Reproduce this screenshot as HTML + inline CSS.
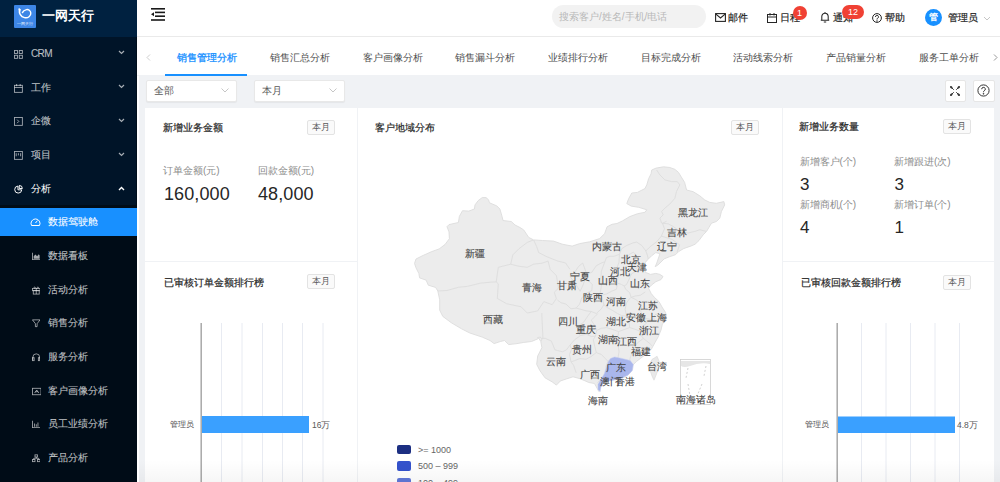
<!DOCTYPE html>
<html><head><meta charset="utf-8">
<style>
*{box-sizing:border-box;margin:0;padding:0}
html,body{width:1000px;height:482px;overflow:hidden;background:#f0f2f5;font-family:"Liberation Sans",sans-serif;font-size:10px;color:#262626}
.a{position:absolute;white-space:nowrap}
#side{position:absolute;left:0;top:0;width:137px;height:482px;background:#001428;box-shadow:inset -1px 0 0 rgba(0,0,0,0.35)}
#logo{position:absolute;left:0;top:0;width:137px;height:37px;background:#002140}
.mi{position:absolute;left:0;width:137px;height:34px;color:rgba(255,255,255,0.7);font-size:10px;-webkit-text-stroke:0.15px rgba(255,255,255,0.5)}
.mi .t{position:absolute;left:31px;top:11px;line-height:12px}
.ic{position:absolute}
#sub{position:absolute;left:0;top:205px;width:137px;height:277px;background:#000c17}
.si{position:absolute;left:0;width:137px;height:28px;color:rgba(255,255,255,0.7);-webkit-text-stroke:0.15px rgba(255,255,255,0.5)}
.si .t{position:absolute;left:48px;top:8px;line-height:12px}
#hdr{position:absolute;left:137px;top:0;width:863px;height:37px;background:#fff;border-bottom:1px solid #eaeaea}
#tabs{position:absolute;left:137px;top:37px;width:863px;height:38px;background:#fff}
.tab{position:absolute;top:51.8px;line-height:12px;color:#4d4d4d;font-size:9.8px}
.card{position:absolute;background:#fff}
.ttl{position:absolute;color:#262626;line-height:12px;font-size:9.8px;-webkit-text-stroke:0.2px #262626}
.tag{position:absolute;height:15px;width:28px;border:1px solid #e3e3e3;border-radius:2px;background:#fafafa;font-size:8.5px;line-height:13px;text-align:center;color:#595959}
.lbl{position:absolute;color:#8c8c8c;line-height:12px}
.val{position:absolute;color:#262626;font-size:18px;line-height:20px}
.ml{position:absolute;text-align:center;color:#444;line-height:12px;font-size:10px;-webkit-text-stroke:0.1px #444}
.sel{position:absolute;top:80px;width:91px;height:21.5px;background:#fff;border:1px solid #e8e8e8;border-radius:2px;box-shadow:0 1px 1px rgba(0,0,0,0.05)}
.sel span{position:absolute;left:7px;top:4px;line-height:12px;color:#595959}
.btn{position:absolute;top:80px;width:22px;height:22px;background:#fff;border:1px solid #e6e6e6;border-radius:2px}
.hi{position:absolute;top:12px;line-height:12px;color:#262626;-webkit-text-stroke:0.2px #262626}
</style></head><body>
<div id="side">
  <div id="logo">
    <div class="a" style="left:14px;top:5px;width:22px;height:23px;background:#3d86e6;border-radius:1px"></div>
    <svg class="ic" style="left:14px;top:5px" width="22" height="23" viewBox="0 0 22 23">
      <path d="M5.3,4.2 C5,8 6.5,11.5 10.5,12.6 C14,13.5 17,11 16.8,8 C16.6,5.5 14.5,4.3 12.5,4.6 C10.5,5 9,6.2 8.4,7.6" fill="none" stroke="#fff" stroke-width="1.4" stroke-linecap="round"/><path d="M4.6,3.8 L6.2,4.6 L5.6,7" fill="none" stroke="#fff" stroke-width="1.2"/>
      <text x="11" y="19.5" font-size="4.2" fill="#e8f0fc" text-anchor="middle">一网天行</text>
    </svg>
    <div class="a" style="left:42px;top:9px;font-size:12.7px;font-weight:bold;color:#fff;line-height:15px">一网天行</div>
  </div>
  <div class="mi" style="top:37px"><span class="t" style="font-size:10px;top:10.5px;letter-spacing:-0.6px">CRM</span>
    <svg class="ic" style="left:14px;top:12.8px" width="8.8" height="8.8" viewBox="0 0 10 10" fill="none" stroke="rgba(255,255,255,0.65)" stroke-width="1"><rect x="0.5" y="0.5" width="3.5" height="3.5"/><rect x="6" y="0.5" width="3.5" height="3.5"/><rect x="0.5" y="6" width="3.5" height="3.5"/><rect x="6" y="6" width="3.5" height="3.5"/></svg>
  </div>
  <div class="mi" style="top:71px"><span class="t">工作</span>
    <svg class="ic" style="left:14px;top:12.8px" width="8.8" height="8.8" viewBox="0 0 10 10" fill="none" stroke="rgba(255,255,255,0.65)" stroke-width="1"><rect x="0.5" y="1.5" width="9" height="8"/><path d="M0.5,4 H9.5 M3,0 V2.5 M7,0 V2.5"/></svg>
  </div>
  <div class="mi" style="top:104px"><span class="t">企微</span>
    <svg class="ic" style="left:14px;top:12.8px" width="8.8" height="8.8" viewBox="0 0 10 10" fill="none" stroke="rgba(255,255,255,0.65)" stroke-width="1"><rect x="0.5" y="0.5" width="9" height="9"/><path d="M3.5,3 L5.5,5 L3.5,7"/></svg>
  </div>
  <div class="mi" style="top:138px"><span class="t">项目</span>
    <svg class="ic" style="left:14px;top:12.8px" width="8.8" height="8.8" viewBox="0 0 10 10" fill="none" stroke="rgba(255,255,255,0.65)" stroke-width="1"><rect x="0.5" y="0.5" width="9" height="9"/><path d="M2.5,2.5 V6 M5,2.5 V5 M7.5,2.5 V6"/></svg>
  </div>
  <div class="mi" style="top:172px;color:#fff"><span class="t">分析</span>
    <svg class="ic" style="left:14px;top:12.8px" width="8.8" height="8.8" viewBox="0 0 10 10" fill="none" stroke="#fff" stroke-width="1.1"><path d="M4.5,1.2 A4,4 0 1 0 8.8,5.5 H4.5Z"/><path d="M6,0.5 A3.5,3.5 0 0 1 9.5,4 H6Z"/></svg>
  </div>
  <svg class="ic" style="left:118px;top:50px" width="7" height="5" viewBox="0 0 7 5" fill="none" stroke="rgba(255,255,255,0.65)" stroke-width="1.2"><path d="M1,1 L3.5,3.5 L6,1"/></svg>
  <svg class="ic" style="left:118px;top:84px" width="7" height="5" viewBox="0 0 7 5" fill="none" stroke="rgba(255,255,255,0.65)" stroke-width="1.2"><path d="M1,1 L3.5,3.5 L6,1"/></svg>
  <svg class="ic" style="left:118px;top:118px" width="7" height="5" viewBox="0 0 7 5" fill="none" stroke="rgba(255,255,255,0.65)" stroke-width="1.2"><path d="M1,1 L3.5,3.5 L6,1"/></svg>
  <svg class="ic" style="left:118px;top:152px" width="7" height="5" viewBox="0 0 7 5" fill="none" stroke="rgba(255,255,255,0.65)" stroke-width="1.2"><path d="M1,1 L3.5,3.5 L6,1"/></svg>
  <svg class="ic" style="left:118px;top:186px" width="7" height="5" viewBox="0 0 7 5" fill="none" stroke="#fff" stroke-width="1.4"><path d="M1,4 L3.5,1.5 L6,4"/></svg>
  <div id="sub">
    <div class="si" style="top:3px;background:#1890ff;color:#fff"><span class="t">数据驾驶舱</span>
      <svg class="ic" style="left:30px;top:9px" width="11" height="10" viewBox="0 0 11 10" fill="none" stroke="#fff" stroke-width="1"><path d="M1.5,8.5 A4.5,4.5 0 1 1 9.5,8.5 Z"/><path d="M5.5,6 L7.5,3.5"/></svg>
    </div>
    <div class="si" style="top:37px"><span class="t">数据看板</span>
      <svg class="ic" style="left:31.5px;top:10px" width="8.5" height="8.5" viewBox="0 0 10 10" fill="rgba(255,255,255,0.65)"><path d="M0,1 H1 V8.5 H10 V9.5 H0Z M2,8 V5 L4,3 L6,5 L8,2.5 L9,4 V8Z"/></svg>
    </div>
    <div class="si" style="top:71px"><span class="t">活动分析</span>
      <svg class="ic" style="left:31.5px;top:10px" width="8.5" height="8.5" viewBox="0 0 10 10" fill="none" stroke="rgba(255,255,255,0.65)" stroke-width="1"><rect x="0.5" y="3" width="9" height="2.5"/><rect x="1.5" y="5.5" width="7" height="4"/><path d="M5,3 V9.5 M5,3 C3,0 1.5,1.5 3,3 M5,3 C7,0 8.5,1.5 7,3"/></svg>
    </div>
    <div class="si" style="top:104px"><span class="t">销售分析</span>
      <svg class="ic" style="left:31.5px;top:10px" width="8.5" height="8.5" viewBox="0 0 10 10" fill="none" stroke="rgba(255,255,255,0.65)" stroke-width="1"><path d="M0.5,1 H9.5 L6,5.5 V9 H4 V5.5Z"/></svg>
    </div>
    <div class="si" style="top:138px"><span class="t">服务分析</span>
      <svg class="ic" style="left:31.5px;top:10px" width="8.5" height="8.5" viewBox="0 0 10 10" fill="none" stroke="rgba(255,255,255,0.65)" stroke-width="1"><path d="M1,8 V5 A4,4 0 0 1 9,5 V8"/><rect x="0.5" y="5.5" width="2" height="3.5"/><rect x="7.5" y="5.5" width="2" height="3.5"/></svg>
    </div>
    <div class="si" style="top:172px"><span class="t">客户画像分析</span>
      <svg class="ic" style="left:31.5px;top:10px" width="9.5" height="8.6" viewBox="0 0 11 10" fill="none" stroke="rgba(255,255,255,0.65)" stroke-width="1"><rect x="0.5" y="1.5" width="10" height="7.5"/><path d="M3,7 L5.5,3.5 L8,7 M4,5.5 H7"/></svg>
    </div>
    <div class="si" style="top:205px"><span class="t">员工业绩分析</span>
      <svg class="ic" style="left:31.5px;top:10px" width="8.5" height="8.5" viewBox="0 0 10 10" fill="rgba(255,255,255,0.65)"><path d="M0,1 H1 V8.5 H10 V9.5 H0Z M2.5,4 H3.5 V8 H2.5Z M4.5,5 H5.5 V8 H4.5Z M6.5,3 H7.5 V8 H6.5Z"/></svg>
    </div>
    <div class="si" style="top:239px"><span class="t">产品分析</span>
      <svg class="ic" style="left:31.5px;top:10px" width="8.5" height="8.5" viewBox="0 0 10 10" fill="none" stroke="rgba(255,255,255,0.65)" stroke-width="1"><rect x="3.5" y="1" width="3" height="2.5"/><rect x="0.5" y="6.5" width="3" height="2.5"/><rect x="6.5" y="6.5" width="3" height="2.5"/><path d="M5,3.5 V5 M2,6.5 V5 H8 V6.5"/></svg>
    </div>
  </div>
</div>
<div id="hdr"></div>
<!-- header -->
<svg class="ic" style="left:150px;top:7px" width="16" height="15" viewBox="0 0 16 15" fill="#1a1a1a"><rect x="1" y="1" width="14" height="1.6"/><rect x="5" y="4.6" width="10" height="1.6"/><rect x="5" y="8.4" width="10" height="1.6"/><rect x="1" y="12.2" width="14" height="1.6"/><path d="M1,7.3 L4,5.3 V9.3Z"/></svg>
<div class="a" style="left:552px;top:5px;width:154px;height:23px;background:#f2f2f2;border-radius:12px"></div>
<div class="a" style="left:559px;top:10.5px;line-height:12px;color:#b8b8b8">搜索客户/姓名/手机/电话</div>
<svg class="ic" style="left:715px;top:13px" width="11" height="9" viewBox="0 0 11 9" fill="none" stroke="#262626" stroke-width="1.1"><rect x="0.6" y="0.6" width="9.8" height="7.8"/><path d="M0.6,0.8 L5.5,5 L10.4,0.8"/></svg>
<div class="hi" style="left:728px">邮件</div>
<svg class="ic" style="left:767px;top:12.5px" width="10" height="10" viewBox="0 0 10 10" fill="none" stroke="#262626" stroke-width="1"><rect x="0.5" y="1.5" width="9" height="8"/><path d="M0.5,4 H9.5 M3,0 V2.5 M7,0 V2.5"/></svg>
<div class="hi" style="left:780px">日程</div>
<div class="a" style="left:792.5px;top:6px;width:14px;height:14px;border-radius:7px;background:#f04134;color:#fff;font-size:9px;line-height:14px;text-align:center">1</div>
<svg class="ic" style="left:819.5px;top:11px" width="10" height="12" viewBox="0 0 10 12" fill="none" stroke="#262626" stroke-width="1.05"><path d="M0.8,9.3 H9.2 M1.8,9.3 V5.5 A3.2,3.3 0 0 1 8.2,5.5 V9.3 M3.8,11 H6.2 M5,1 V2.2"/></svg>
<div class="hi" style="left:833px">通知</div>
<div class="a" style="left:842px;top:5px;width:22px;height:14px;border-radius:7px;background:#f04134;color:#fff;font-size:9px;line-height:14px;text-align:center">12</div>
<svg class="ic" style="left:872px;top:13px" width="10" height="10" viewBox="0 0 10 10" fill="none" stroke="#262626" stroke-width="1"><circle cx="5" cy="5" r="4.4"/><path d="M3.5,4 A1.5,1.5 0 1 1 5.5,5.3 C5,5.5 5,6 5,6.5"/><circle cx="5" cy="8" r="0.3"/></svg>
<div class="hi" style="left:885px">帮助</div>
<div class="a" style="left:924.5px;top:9px;width:17px;height:17px;border-radius:9px;background:#1890ff;color:#fff;font-size:8.5px;line-height:17px;text-align:center;font-weight:bold">管</div>
<div class="hi" style="left:948px">管理员</div>
<svg class="ic" style="left:983px;top:16px" width="8" height="5" viewBox="0 0 8 5" fill="none" stroke="#bfbfbf" stroke-width="0.9"><path d="M1,1 L4,4 L7,1"/></svg>

<div id="tabs"></div>
<svg class="ic" style="left:146px;top:54px" width="5" height="7" viewBox="0 0 5 7" fill="none" stroke="#c8c8c8" stroke-width="0.9"><path d="M4,0.5 L1,3.5 L4,6.5"/></svg>
<svg class="ic" style="left:993px;top:54px" width="5" height="7" viewBox="0 0 5 7" fill="none" stroke="#8c8c8c" stroke-width="0.9"><path d="M1,0.5 L4,3.5 L1,6.5"/></svg>
<div class="tab" style="left:177px;color:#1890ff;-webkit-text-stroke:0.3px #1890ff">销售管理分析</div>
<div class="tab" style="left:270px">销售汇总分析</div>
<div class="tab" style="left:362.5px">客户画像分析</div>
<div class="tab" style="left:455px">销售漏斗分析</div>
<div class="tab" style="left:547.5px">业绩排行分析</div>
<div class="tab" style="left:640.5px">目标完成分析</div>
<div class="tab" style="left:733px">活动线索分析</div>
<div class="tab" style="left:825.5px">产品销量分析</div>
<div class="tab" style="left:918.5px">服务工单分析</div>
<div class="a" style="left:165px;top:74px;width:82px;height:2px;background:#1890ff"></div>
<div class="a" style="left:137px;top:76px;width:2px;height:406px;background:#fff"></div>

<!-- filters -->
<div class="sel" style="left:145.8px"><span>全部</span></div>
<div class="sel" style="left:253.8px"><span>本月</span></div>
<svg class="ic" style="left:221px;top:88px" width="8" height="5" viewBox="0 0 8 5" fill="none" stroke="#c0c0c0" stroke-width="0.9"><path d="M0.5,0.5 L4,4 L7.5,0.5"/></svg>
<svg class="ic" style="left:329px;top:88px" width="8" height="5" viewBox="0 0 8 5" fill="none" stroke="#c0c0c0" stroke-width="0.9"><path d="M0.5,0.5 L4,4 L7.5,0.5"/></svg>
<div class="btn" style="left:944.5px;width:21.5px;height:21.5px"></div>
<div class="btn" style="left:972.5px"></div>
<svg class="ic" style="left:949px;top:85px" width="12" height="12" viewBox="0 0 12 12" fill="none" stroke="#333" stroke-width="1" stroke-linecap="round"><path d="M2,2 L4.5,4.5 M10,2 L7.5,4.5 M2,10 L4.5,7.5 M10,10 L7.5,7.5"/><g stroke-width="2"><path d="M2,2 L2.6,2.6 M10,2 L9.4,2.6 M2,10 L2.6,9.4 M10,10 L9.4,9.4"/></g></svg>
<svg class="ic" style="left:977.2px;top:84px" width="13" height="13" viewBox="0 0 13 13" fill="none" stroke="#333" stroke-width="1"><circle cx="6.5" cy="6.5" r="5.6"/><path d="M4.7,5.2 A1.8,1.8 0 1 1 7.2,6.8 C6.6,7.1 6.5,7.5 6.5,8.2"/><circle cx="6.5" cy="9.8" r="0.4" fill="#333"/></svg>

<!-- cards -->
<div class="card" style="left:145px;top:108px;width:212px;height:153px"></div>
<div class="card" style="left:145px;top:262px;width:212px;height:220px"></div>
<div class="card" style="left:358px;top:108px;width:424px;height:374px"></div>
<div class="card" style="left:783px;top:108px;width:211px;height:153px"></div>
<div class="card" style="left:783px;top:262px;width:211px;height:220px"></div>

<div class="ttl" style="left:163px;top:122px">新增业务金额</div>
<div class="tag" style="left:307px;top:120px">本月</div>
<div class="lbl" style="left:163px;top:165px">订单金额(元)</div>
<div class="lbl" style="left:257.5px;top:165px">回款金额(元)</div>
<div class="val" style="left:164px;top:183.5px;letter-spacing:0.1px">160,000</div>
<div class="val" style="left:258px;top:183.5px;letter-spacing:0.1px">48,000</div>

<div class="ttl" style="left:163.5px;top:276.5px">已审核订单金额排行榜</div>
<div class="tag" style="left:307px;top:274px">本月</div>
<svg class="ic" style="left:145px;top:262px" width="212" height="220">
  <g stroke="#e8ebf2" stroke-width="1"><path d="M76.5,61 V220 M97,61 V220 M117.5,61 V220 M137.5,61 V220 M157.5,61 V220 M178,61 V220"/></g>
  <path d="M56.2,61 V220" stroke="#a8a8a8" stroke-width="1.5"/>
  <rect x="57" y="154" width="107" height="17" fill="#3aa0ff"/>
</svg>
<div class="a" style="left:170px;top:418.5px;line-height:12px;font-size:8px;color:#4a4a4a">管理员</div>
<div class="a" style="left:312px;top:418.5px;line-height:12px;font-size:8.5px;color:#595959">16万</div>

<div class="ttl" style="left:375px;top:122px">客户地域分布</div>
<div class="tag" style="left:731px;top:120px">本月</div>
<svg class="a" style="left:0;top:0" width="1000" height="482" viewBox="0 0 1000 482">
<defs><clipPath id="cl"><path d="M414.5,263.4 L416.0,259.0 L423.2,255.4 L431.2,251.8 L439.2,248.9 L445.0,244.5 L449.4,238.7 L449.0,231.9 L447.0,226.7 L449.0,224.6 L458.4,222.5 L459.4,216.3 L462.5,210.7 L468.8,211.1 L474.4,209.0 L475.0,204.9 L478.1,200.7 L482.2,197.6 L486.0,197.6 L488.5,199.7 L489.5,202.8 L496.8,205.9 L499.9,209.0 L502.0,216.3 L503.0,220.5 L511.3,221.5 L515.0,225.0 L520.0,227.5 L523.7,229.9 L528.7,237.4 L533.6,239.9 L542.4,240.5 L553.6,241.1 L562.3,244.2 L572.2,246.1 L579.7,243.6 L589.6,241.8 L599.6,238.6 L604.6,233.7 L607.1,226.8 L612.0,224.3 L617.0,223.5 L622.3,221.0 L629.8,216.6 L637.3,213.8 L644.9,212.3 L646.8,209.8 L638.7,207.3 L631.2,206.1 L626.8,203.6 L628.7,198.6 L631.8,193.0 L637.4,192.4 L644.9,188.6 L646.8,184.9 L648.6,178.7 L651.1,173.7 L651.7,170.0 L656.1,168.1 L663.6,166.8 L669.8,167.5 L674.8,169.3 L678.5,172.4 L684.6,182.4 L686.6,190.0 L693.2,191.7 L699.8,195.8 L704.8,200.0 L709.8,202.4 L716.4,203.3 L723.9,201.6 L724.7,204.9 L721.4,211.6 L719.8,218.2 L716.4,221.5 L711.5,223.2 L709.0,227.3 L706.5,231.5 L703.2,234.8 L699.0,240.5 L695.0,244.3 L690.0,246.4 L683.8,248.5 L678.6,251.6 L675.5,254.7 L669.3,256.8 L664.1,258.9 L661.0,262.0 L657.8,265.1 L655.2,266.7 L656.8,263.0 L658.9,256.8 L659.9,253.7 L655.8,252.6 L651.6,255.8 L647.5,259.9 L644.8,263.0 L644.3,268.2 L645.5,272.4 L650.6,274.4 L655.8,273.4 L659.9,274.4 L663.0,276.5 L661.0,279.6 L655.8,281.7 L651.6,285.0 L648.5,288.1 L651.2,293.5 L654.5,297.5 L659.0,301.6 L662.0,307.0 L665.5,312.4 L666.5,316.4 L665.8,320.5 L662.4,324.0 L661.0,329.9 L658.5,336.3 L655.0,342.5 L651.2,349.5 L647.3,353.2 L640.5,358.4 L636.4,361.5 L632.9,365.0 L632.6,369.5 L628.1,375.0 L621.9,378.5 L615.6,379.5 L608.4,379.5 L604.2,381.2 L600.1,385.4 L598.0,390.5 L599.3,391.6 L597.5,389.0 L594.5,383.5 L588.9,382.5 L580.0,378.7 L573.0,376.8 L566.8,378.8 L560.5,380.9 L556.4,385.1 L552.2,381.9 L545.0,377.8 L539.8,370.5 L536.7,364.3 L537.7,356.0 L541.9,347.7 L540.8,341.5 L538.8,338.4 L531.5,341.5 L523.2,342.5 L517.0,343.6 L508.7,344.6 L504.5,340.5 L500.4,341.5 L494.1,343.6 L490.0,340.5 L482.2,337.1 L469.8,333.0 L461.5,328.8 L451.1,322.6 L442.8,316.4 L439.7,310.2 L439.7,299.8 L437.8,291.0 L435.6,287.4 L428.3,285.2 L426.1,280.1 L419.6,277.9 L418.9,273.6 L416.0,267.8Z"/></clipPath></defs>
<path d="M414.5,263.4 L416.0,259.0 L423.2,255.4 L431.2,251.8 L439.2,248.9 L445.0,244.5 L449.4,238.7 L449.0,231.9 L447.0,226.7 L449.0,224.6 L458.4,222.5 L459.4,216.3 L462.5,210.7 L468.8,211.1 L474.4,209.0 L475.0,204.9 L478.1,200.7 L482.2,197.6 L486.0,197.6 L488.5,199.7 L489.5,202.8 L496.8,205.9 L499.9,209.0 L502.0,216.3 L503.0,220.5 L511.3,221.5 L515.0,225.0 L520.0,227.5 L523.7,229.9 L528.7,237.4 L533.6,239.9 L542.4,240.5 L553.6,241.1 L562.3,244.2 L572.2,246.1 L579.7,243.6 L589.6,241.8 L599.6,238.6 L604.6,233.7 L607.1,226.8 L612.0,224.3 L617.0,223.5 L622.3,221.0 L629.8,216.6 L637.3,213.8 L644.9,212.3 L646.8,209.8 L638.7,207.3 L631.2,206.1 L626.8,203.6 L628.7,198.6 L631.8,193.0 L637.4,192.4 L644.9,188.6 L646.8,184.9 L648.6,178.7 L651.1,173.7 L651.7,170.0 L656.1,168.1 L663.6,166.8 L669.8,167.5 L674.8,169.3 L678.5,172.4 L684.6,182.4 L686.6,190.0 L693.2,191.7 L699.8,195.8 L704.8,200.0 L709.8,202.4 L716.4,203.3 L723.9,201.6 L724.7,204.9 L721.4,211.6 L719.8,218.2 L716.4,221.5 L711.5,223.2 L709.0,227.3 L706.5,231.5 L703.2,234.8 L699.0,240.5 L695.0,244.3 L690.0,246.4 L683.8,248.5 L678.6,251.6 L675.5,254.7 L669.3,256.8 L664.1,258.9 L661.0,262.0 L657.8,265.1 L655.2,266.7 L656.8,263.0 L658.9,256.8 L659.9,253.7 L655.8,252.6 L651.6,255.8 L647.5,259.9 L644.8,263.0 L644.3,268.2 L645.5,272.4 L650.6,274.4 L655.8,273.4 L659.9,274.4 L663.0,276.5 L661.0,279.6 L655.8,281.7 L651.6,285.0 L648.5,288.1 L651.2,293.5 L654.5,297.5 L659.0,301.6 L662.0,307.0 L665.5,312.4 L666.5,316.4 L665.8,320.5 L662.4,324.0 L661.0,329.9 L658.5,336.3 L655.0,342.5 L651.2,349.5 L647.3,353.2 L640.5,358.4 L636.4,361.5 L632.9,365.0 L632.6,369.5 L628.1,375.0 L621.9,378.5 L615.6,379.5 L608.4,379.5 L604.2,381.2 L600.1,385.4 L598.0,390.5 L599.3,391.6 L597.5,389.0 L594.5,383.5 L588.9,382.5 L580.0,378.7 L573.0,376.8 L566.8,378.8 L560.5,380.9 L556.4,385.1 L552.2,381.9 L545.0,377.8 L539.8,370.5 L536.7,364.3 L537.7,356.0 L541.9,347.7 L540.8,341.5 L538.8,338.4 L531.5,341.5 L523.2,342.5 L517.0,343.6 L508.7,344.6 L504.5,340.5 L500.4,341.5 L494.1,343.6 L490.0,340.5 L482.2,337.1 L469.8,333.0 L461.5,328.8 L451.1,322.6 L442.8,316.4 L439.7,310.2 L439.7,299.8 L437.8,291.0 L435.6,287.4 L428.3,285.2 L426.1,280.1 L419.6,277.9 L418.9,273.6 L416.0,267.8Z" fill="#ececec" stroke="#dcdcdc" stroke-width="0.9"/>
<path d="M437.8,291.0 L447.0,290.5 L458.4,287.3 L467.7,286.3 L480.2,283.2 L490.5,282.2 L496.2,281.9 M498.3,267.3 L496.2,281.9 L498.3,283.9 L497.3,298.5 L506.6,303.7 L521.1,306.8 L527.3,313.0 L537.7,310.9 L543.9,301.6 L552.2,304.7 L556.4,298.5 L554.3,292.2 L558.5,288.1 L556.4,275.6 L550.2,269.4 L548.1,261.1 M498.3,267.3 L502.4,266.3 L510.7,264.2 L519.0,266.3 L527.3,267.3 L533.6,264.2 L541.9,263.2 L548.1,261.1 M510.7,264.2 L512.8,254.9 L519.0,248.7 L527.3,242.4 L533.6,239.9 M533.6,239.9 L536.6,246.4 L538.7,252.6 L547.0,256.8 L557.3,260.9 L565.6,263.0 L569.8,269.2 M541.9,313.0 L541.9,316.6 L542.9,337.3 L540.8,341.5 M656.6,170.0 L659.9,174.9 L664.9,179.9 L671.5,181.6 L677.3,181.6 L679.8,184.9 L676.5,191.5 L674.9,198.2 L669.9,204.0 L664.9,208.1 L661.6,211.5 L663.2,214.8 L659.9,218.1 L661.6,223.1 M661.6,223.1 L668.2,223.9 L673.2,226.4 L679.8,231.4 L688.1,233.0 L694.8,231.4 L700.0,229.7 L706.5,231.5 M570.0,276.5 L574.6,272.4 L578.6,266.4 L582.7,263.0 L586.7,273.8 L585.2,279.2 L582.7,285.9 L580.1,291.3 L577.6,287.2 L575.6,283.9 L570.0,276.5 M586.7,273.8 L591.8,272.4 L596.3,265.7 L601.4,263.0 L604.9,261.7 L606.4,257.6 L609.9,256.3 L614.0,256.3 L619.5,254.3 L621.5,248.9 L626.6,245.5 L633.2,242.8 L636.7,242.1 L641.8,245.5 L645.8,250.9 L650.8,246.2 L656.9,241.5 L661.4,236.1 L664.5,228.7 L662.5,223.3 L666.5,221.3 M661.4,236.1 L672.0,239.4 L679.6,244.8 L677.1,252.2 M645.8,250.9 L647.3,254.9 L648.3,259.0 M626.6,258.3 L628.6,254.9 L633.2,252.2 L636.2,254.9 L635.2,259.0 L632.7,261.7 L629.1,261.7 L626.6,258.3 M635.2,257.6 L637.2,257.6 L639.2,264.3 L636.7,268.4 L634.2,267.7 L634.2,262.3 L635.2,257.6 M619.5,254.3 L619.0,262.3 L617.0,267.7 L619.0,275.1 L617.0,281.2 L617.5,283.2 L621.5,284.5 L624.1,285.9 L626.6,284.5 L629.1,279.2 L631.6,273.8 L638.2,269.7 M604.9,261.7 L601.4,271.1 L600.8,279.2 L601.4,285.9 L600.3,292.6 L601.4,295.3 L606.4,294.0 L611.5,291.3 L616.5,289.2 L617.5,283.2 M601.4,295.3 L602.9,300.7 L603.9,304.7 L601.4,308.8 L596.3,313.5 L591.2,311.5 L586.2,310.8 L581.1,309.4 L576.1,308.1 M576.1,308.1 L579.6,304.1 L581.7,298.0 L586.2,293.3 L591.8,290.6 L592.3,284.5 L587.7,279.8 L585.2,279.2 M576.1,308.1 L571.0,308.8 L566.0,304.1 L561.0,302.7 L557.4,300.0 M624.1,285.9 L625.6,289.2 L629.6,292.6 L631.1,297.3 L635.2,296.0 L640.2,295.3 L645.3,291.9 M631.1,297.3 L629.1,299.3 L626.6,302.7 L625.1,309.4 L626.1,314.1 L627.1,316.2 L621.5,315.5 L617.5,313.5 L612.0,310.1 L606.9,307.4 L603.9,304.7 M631.1,297.3 L636.7,300.0 L641.8,306.1 L640.7,311.5 L644.3,317.5 L645.3,318.2 L650.8,319.5 L653.9,320.2 M653.9,316.2 L655.9,314.1 L658.9,314.8 L659.4,320.2 L654.4,320.9 L653.9,316.2 M645.3,318.2 L646.8,322.9 L641.2,327.6 L639.7,331.0 L634.2,329.0 L629.6,327.6 L629.1,320.9 L627.1,316.2 M639.7,331.0 L641.2,335.7 L643.3,338.4 L646.8,341.1 L650.8,344.4 L651.9,345.8 M643.3,338.4 L637.2,343.1 L633.2,349.8 L630.6,356.5 L629.1,362.6 L632.2,364.6 L635.2,370.0 M629.1,362.6 L626.6,362.6 L622.6,362.6 L619.0,361.3 L618.0,357.9 L619.0,351.8 L618.0,344.4 L618.0,337.0 L618.5,331.6 L624.1,329.6 L629.6,327.6 M618.5,331.6 L613.0,329.6 L606.4,327.6 L601.4,328.3 L596.8,330.3 L593.8,324.2 L591.2,320.2 L595.3,316.2 L597.8,313.5 M618.0,357.9 L614.0,359.9 L610.4,359.9 L607.9,361.3 L605.4,358.6 L601.4,354.5 L597.8,353.2 L596.3,352.5 L594.8,346.5 L593.3,339.7 L595.3,336.4 L596.8,330.3 M607.9,361.3 L605.9,366.6 L607.4,373.4 L601.4,378.8 L597.3,382.8 M596.3,352.5 L591.2,356.5 L586.2,359.2 L579.6,358.6 L574.6,360.6 L571.0,361.9 L573.6,365.3 L576.1,372.7 M571.0,361.9 L569.5,354.5 L571.6,349.1 L570.0,345.1 L574.6,339.7 L578.6,337.0 L580.1,335.7 L586.2,334.3 L591.2,336.4 L595.3,336.4 M580.1,335.7 L577.6,331.0 L579.6,324.9 L583.7,322.2 L587.7,316.2 L591.2,311.5 M570.0,345.1 L566.5,349.8 L562.5,351.8 L557.4,350.5 L554.9,349.8 L551.4,341.1 L545.3,338.4 L541.3,338.4 L540.2,337.0 L537.2,337.7" fill="none" stroke="#dcdcdc" stroke-width="0.9" clip-path="url(#cl)"/>
<path d="M610.5,358.4 L614.6,356.9 L621.9,358.4 L630.2,360.5 L633.3,364.6 L632.2,370.8 L628.1,375.0 L621.9,378.1 L613.6,380.2 L607.3,381.2 L603.2,383.3 L601.1,386.4 L600.1,391.6 L598.0,389.5 L598.0,384.3 L601.1,379.1 L604.2,373.9 L606.3,367.7 L608.4,361.5Z" fill="#a9b6ec" stroke="#c4cdf0" stroke-width="0.5"/>
<path d="M652.0,359.4 L657.1,356.3 L659.2,361.5 L658.2,369.8 L654.0,380.2 L652.0,376.0 L649.9,369.8 L649.9,363.6Z" fill="#e9e9e9" stroke="#d6d6d6" stroke-width="0.6"/>
<rect x="680.5" y="359.5" width="30" height="45" fill="none" stroke="#cfcfcf" stroke-width="0.8"/>
<path d="M681,361 L710,361 L710,364 Q700,362 690,366 Q684,368 681,366Z" fill="#e6e6e6"/>
<path d="M688,368 L686,378 M688,384 L690,396 M706,366 L704,376 M702,384 L697,396" stroke="#bdbdbd" stroke-width="0.7" stroke-dasharray="2,2" fill="none"/>
</svg>
<div class="ml" style="left:678.2px;top:207.3px;width:30px">黑龙江</div>
<div class="ml" style="left:666.6px;top:227.1px;width:20px">吉林</div>
<div class="ml" style="left:657.3px;top:241.2px;width:20px">辽宁</div>
<div class="ml" style="left:592.4px;top:241.0px;width:30px">内蒙古</div>
<div class="ml" style="left:621.2px;top:253.6px;width:20px">北京</div>
<div class="ml" style="left:627.3px;top:261.6px;width:20px">天津</div>
<div class="ml" style="left:609.5px;top:266.1px;width:20px">河北</div>
<div class="ml" style="left:598.2px;top:274.8px;width:20px">山西</div>
<div class="ml" style="left:629.5px;top:278.3px;width:20px">山东</div>
<div class="ml" style="left:569.8px;top:271.3px;width:20px">宁夏</div>
<div class="ml" style="left:556.7px;top:279.6px;width:20px">甘肃</div>
<div class="ml" style="left:521.6px;top:281.8px;width:20px">青海</div>
<div class="ml" style="left:465.0px;top:247.6px;width:20px">新疆</div>
<div class="ml" style="left:482.6px;top:314.1px;width:20px">西藏</div>
<div class="ml" style="left:583.0px;top:292.1px;width:20px">陕西</div>
<div class="ml" style="left:606.4px;top:295.6px;width:20px">河南</div>
<div class="ml" style="left:637.8px;top:300.0px;width:20px">江苏</div>
<div class="ml" style="left:626.0px;top:312.1px;width:20px">安徽</div>
<div class="ml" style="left:647.0px;top:312.1px;width:20px">上海</div>
<div class="ml" style="left:605.6px;top:315.7px;width:20px">湖北</div>
<div class="ml" style="left:557.9px;top:315.6px;width:20px">四川</div>
<div class="ml" style="left:575.8px;top:324.0px;width:20px">重庆</div>
<div class="ml" style="left:638.5px;top:325.1px;width:20px">浙江</div>
<div class="ml" style="left:598.2px;top:334.0px;width:20px">湖南</div>
<div class="ml" style="left:617.0px;top:335.5px;width:20px">江西</div>
<div class="ml" style="left:572.4px;top:343.7px;width:20px">贵州</div>
<div class="ml" style="left:630.7px;top:346.3px;width:20px">福建</div>
<div class="ml" style="left:546.0px;top:355.9px;width:20px">云南</div>
<div class="ml" style="left:647.0px;top:361.1px;width:20px">台湾</div>
<div class="ml" style="left:605.7px;top:361.6px;width:20px">广东</div>
<div class="ml" style="left:579.7px;top:369.4px;width:20px">广西</div>
<div class="ml" style="left:599.8px;top:376.0px;width:20px">澳门</div>
<div class="ml" style="left:614.5px;top:376.0px;width:20px">香港</div>
<div class="ml" style="left:588.0px;top:394.5px;width:20px">海南</div>
<div class="ml" style="left:675.5px;top:393.7px;width:40px">南海诸岛</div>

<div class="a" style="left:397px;top:444.5px;width:14px;height:9.5px;border-radius:2px;background:#1c2f82"></div>
<div class="a" style="left:397px;top:461.3px;width:14px;height:9.5px;border-radius:2px;background:#3452cc"></div>
<div class="a" style="left:397px;top:478.3px;width:14px;height:9.5px;border-radius:2px;background:#6078d8"></div>
<div class="a" style="left:418px;top:443.5px;line-height:12px;font-size:9px;color:#666">&gt;= 1000</div>
<div class="a" style="left:418px;top:460px;line-height:12px;font-size:9px;color:#666">500 – 999</div>
<div class="a" style="left:418px;top:477px;line-height:12px;font-size:9px;color:#666">100 – 499</div>

<div class="ttl" style="left:799px;top:121px">新增业务数量</div>
<div class="tag" style="left:943px;top:119px">本月</div>
<div class="lbl" style="left:799.5px;top:156px">新增客户(个)</div>
<div class="lbl" style="left:894px;top:156px">新增跟进(次)</div>
<div class="val" style="left:800px;top:175px;font-size:17px">3</div>
<div class="val" style="left:894.5px;top:175px;font-size:17px">3</div>
<div class="lbl" style="left:799.5px;top:199px">新增商机(个)</div>
<div class="lbl" style="left:894px;top:199px">新增订单(个)</div>
<div class="val" style="left:800px;top:218px;font-size:17px">4</div>
<div class="val" style="left:894.5px;top:218px;font-size:17px">1</div>

<div class="ttl" style="left:800.5px;top:276.5px">已审核回款金额排行榜</div>
<div class="tag" style="left:943px;top:275px">本月</div>
<svg class="ic" style="left:783px;top:262px" width="211" height="220">
  <g stroke="#e8ebf2" stroke-width="1"><path d="M78.5,61 V220 M103,61 V220 M127.5,61 V220 M152,61 V220 M176.5,61 V220"/></g>
  <path d="M54.2,61 V220" stroke="#a8a8a8" stroke-width="1.5"/>
  <rect x="55" y="154.5" width="117" height="16.5" fill="#3aa0ff"/>
</svg>
<div class="a" style="left:805px;top:418.5px;line-height:12px;font-size:8px;color:#4a4a4a">管理员</div>
<div class="a" style="left:957px;top:418.5px;line-height:12px;font-size:8.5px;color:#595959">4.8万</div>

<div class="a" style="left:139px;top:460px;width:861px;height:22px;background:linear-gradient(rgba(0,0,0,0),rgba(0,0,0,0.035))"></div>
</body></html>
